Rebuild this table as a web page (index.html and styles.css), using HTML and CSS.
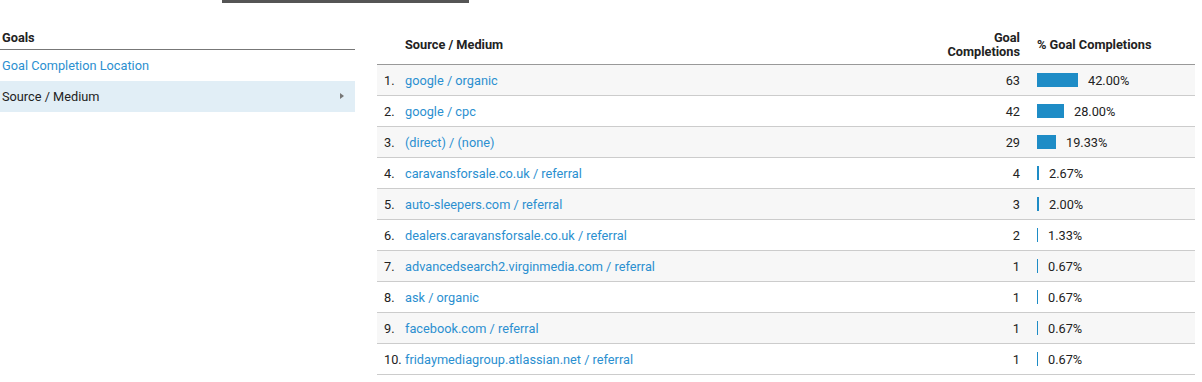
FILE: index.html
```html
<!DOCTYPE html>
<html>
<head>
<meta charset="utf-8">
<link rel="stylesheet" href="styles.css">
</head>
<body>
<div class="topstrip"><div class="topbar"></div></div>
<div class="main">
  <div class="side">
    <div class="side-head">Goals</div>
    <div class="side-item link">Goal Completion Location</div>
    <div class="side-item selected">Source / Medium<span class="caret"></span></div>
  </div>
  <div class="table">
    <div class="row head">
      <div class="c-src">Source / Medium</div>
      <div class="c-val">Goal<br>Completions</div>
      <div class="c-pct">% Goal Completions</div>
    </div>
    <div class="row odd"><div class="c-num">1.</div><div class="c-name link">google / organic</div><div class="c-val">63</div><div class="c-pct"><span class="bar" style="width:41px"></span>42.00%</div></div>
    <div class="row"><div class="c-num">2.</div><div class="c-name link">google / cpc</div><div class="c-val">42</div><div class="c-pct"><span class="bar" style="width:27px"></span>28.00%</div></div>
    <div class="row odd"><div class="c-num">3.</div><div class="c-name link">(direct) / (none)</div><div class="c-val">29</div><div class="c-pct"><span class="bar" style="width:19px"></span>19.33%</div></div>
    <div class="row"><div class="c-num">4.</div><div class="c-name link">caravansforsale.co.uk / referral</div><div class="c-val">4</div><div class="c-pct"><span class="bar" style="width:2px"></span>2.67%</div></div>
    <div class="row odd"><div class="c-num">5.</div><div class="c-name link">auto-sleepers.com / referral</div><div class="c-val">3</div><div class="c-pct"><span class="bar" style="width:2px"></span>2.00%</div></div>
    <div class="row"><div class="c-num">6.</div><div class="c-name link">dealers.caravansforsale.co.uk / referral</div><div class="c-val">2</div><div class="c-pct"><span class="bar" style="width:1px"></span>1.33%</div></div>
    <div class="row odd"><div class="c-num">7.</div><div class="c-name link">advancedsearch2.virginmedia.com / referral</div><div class="c-val">1</div><div class="c-pct"><span class="bar" style="width:1px"></span>0.67%</div></div>
    <div class="row"><div class="c-num">8.</div><div class="c-name link">ask / organic</div><div class="c-val">1</div><div class="c-pct"><span class="bar" style="width:1px"></span>0.67%</div></div>
    <div class="row odd"><div class="c-num">9.</div><div class="c-name link">facebook.com / referral</div><div class="c-val">1</div><div class="c-pct"><span class="bar" style="width:1px"></span>0.67%</div></div>
    <div class="row"><div class="c-num">10.</div><div class="c-name link">fridaymediagroup.atlassian.net / referral</div><div class="c-val">1</div><div class="c-pct"><span class="bar" style="width:1px"></span>0.67%</div></div>
  </div>
</div>
</body>
</html>
```
FILE: styles.css
```css
* { box-sizing: border-box; }
body {
  margin: 0;
  font-family: Roboto, "Liberation Sans", Arial, sans-serif;
  font-size: 12.75px;
  color: #222;
  background: #fff;
}
.topstrip { height: 3px; }
.topbar {
  margin-left: 222px;
  width: 247px;
  height: 3px;
  background: #555;
}
.main {
  display: flex;
  margin-top: 27px;
  gap: 22px;
}
.link { color: #2b8fd0; }
.side { width: 355px; flex: none; }
.side-head {
  font-weight: bold;
  line-height: 16px;
  padding: 0 0 3px 2px;
  border-bottom: 1px solid #777;
}
.side-item {
  height: 31px;
  display: flex;
  align-items: center;
  padding-left: 2px;
  position: relative;
}
.side-item.selected { background: #e1eef6; }
.caret {
  position: absolute;
  right: 11px;
  top: 12px;
  width: 0; height: 0;
  border-top: 3.5px solid transparent;
  border-bottom: 3.5px solid transparent;
  border-left: 4px solid #777;
}
.table { width: 818px; flex: none; }
.row {
  display: grid;
  grid-template-columns: 28px 1fr 120px 175px;
  height: 31px;
  align-items: center;
  border-bottom: 1px solid #ccc;
}
.row.odd { background: #f7f7f7; }
.row.head {
  height: 35px;
  font-weight: bold;
  line-height: 14px;
  border-bottom: 1px solid #999;
  padding-bottom: 5px;
  align-items: end;
  background: #fff;
}
.row.head .c-src { grid-column: 2; align-self: center; }
.row.head .c-pct { align-self: center; }
.c-num { padding-left: 7px; }
.c-name { white-space: nowrap; }
.c-val { text-align: right; }
.c-pct {
  padding-left: 17px;
  display: flex;
  align-items: center;
}
.bar {
  display: inline-block;
  height: 14px;
  background: #1e8cc6;
  margin-right: 10px;
  flex: none;
}
```
